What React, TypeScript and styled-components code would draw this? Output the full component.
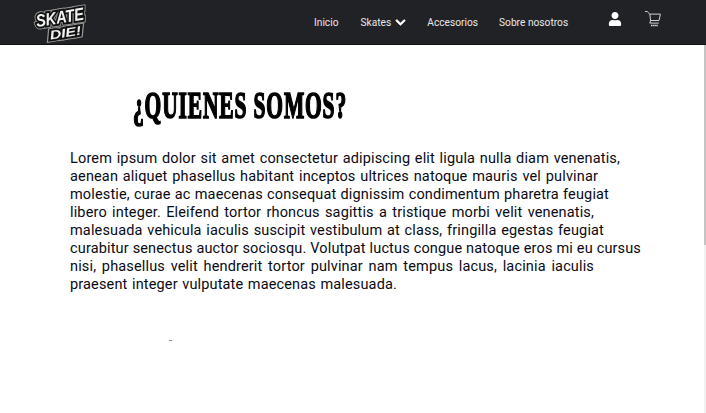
import { createGlobalStyle } from 'styled-components';
import styled from 'styled-components';
import { FaChevronDown, FaUser } from 'react-icons/fa';

const LINES = [
  { text: 'Lorem ipsum dolor sit amet consectetur adipiscing elit ligula nulla diam venenatis,', width: 550 },
  { text: 'aenean aliquet phasellus habitant inceptos ultrices natoque mauris vel pulvinar', width: 528 },
  { text: 'molestie, curae ac maecenas consequat dignissim condimentum pharetra feugiat', width: 539 },
  { text: 'libero integer. Eleifend tortor rhoncus sagittis a tristique morbi velit venenatis,', width: 524 },
  { text: 'malesuada vehicula iaculis suscipit vestibulum at class, fringilla egestas feugiat', width: 534 },
  { text: 'curabitur senectus auctor sociosqu. Volutpat luctus congue natoque eros mi eu cursus', width: 571 },
  { text: 'nisi, phasellus velit hendrerit tortor pulvinar nam tempus lacus, lacinia iaculis', width: 524 },
  { text: 'praesent integer vulputate maecenas malesuada.', width: 327 },
];

function LogoWord({ x, y, size, length, children }: { x: number; y: number; size: number; length: number; children: string }) {
  return (
    <>
      <text x={x} y={y} fontSize={size} textLength={length} lengthAdjust="spacingAndGlyphs" fill="#999" stroke="#999" strokeWidth="5.6">
        {children}
      </text>
      <text x={x} y={y} fontSize={size} textLength={length} lengthAdjust="spacingAndGlyphs" fill="#111" stroke="#111" strokeWidth="3.8">
        {children}
      </text>
      <text x={x} y={y} fontSize={size} textLength={length} lengthAdjust="spacingAndGlyphs" fill="#f2f2f2">
        {children}
      </text>
    </>
  );
}

export default function App() {
  return (
    <Page>
      <GlobalStyle />
      <Header>
        <Logo viewBox="0 0 56 38" aria-label="Skate or Die">
          <g transform="rotate(-9 28 18)" fontFamily="'Liberation Sans', sans-serif" fontWeight="700" fontStyle="italic">
            <LogoWord x={6} y={20} size={17} length={47}>SKATE</LogoWord>
            <LogoWord x={17} y={34} size={12} length={31}>DIE!</LogoWord>
          </g>
        </Logo>
        <Nav>
          <NavLink>Inicio</NavLink>
          <NavLink>
            Skates <Chevron />
          </NavLink>
          <NavLink>Accesorios</NavLink>
          <NavLink>Sobre nosotros</NavLink>
        </Nav>
        <Actions>
          <FaUser size={14} color="#fff" />
          <CartIcon viewBox="0 0 18 18" fill="none" stroke="#e4e4e4" strokeWidth="0.9">
            <path d="M1 1.5h2.2l2.6 2.6h10.6l-1.4 6.4H6.6L5.8 4.1" />
            <path d="M6.6 10.5l-.8 2.6h9" />
            <path d="M7 15.5h7" strokeWidth="1.6" strokeDasharray="1.5 .6" />
          </CartIcon>
        </Actions>
      </Header>
      <Main>
        <Title>¿QUIENES SOMOS?</Title>
        <Body>
          {LINES.map((line) => (
            <Line key={line.text} style={{ width: line.width }}>
              {line.text}
            </Line>
          ))}
        </Body>
        <Speck />
      </Main>
      <ScrollTrack>
        <ScrollThumb />
      </ScrollTrack>
    </Page>
  );
}

const GlobalStyle = createGlobalStyle`
  html, body {
    margin: 0;
    padding: 0;
    background: #ffffff;
    overflow: hidden;
  }
`;

const Page = styled.div`
  position: relative;
  width: 706px;
  height: 413px;
  overflow: hidden;
  font-family: 'Roboto', sans-serif;
  background: #ffffff;
`;

const Header = styled.header`
  display: flex;
  align-items: center;
  box-sizing: border-box;
  height: 45px;
  padding-left: 30px;
  background: #212226;
  border-bottom: 1px solid #111114;
`;

const Logo = styled.svg`
  width: 58px;
  height: 39px;
  overflow: visible;
  filter: blur(0.5px);
`;

const Nav = styled.nav`
  display: flex;
  align-items: center;
  gap: 21px;
  margin-left: 226px;
`;

const NavLink = styled.a`
  display: flex;
  align-items: center;
  gap: 4px;
  color: #e8e8e8;
  font-size: 10.2px;
  &:first-child {
    margin-right: 1px;
  }
`;

const Chevron = styled(FaChevronDown)`
  width: 11px;
  height: 11px;
  color: #ffffff;
  stroke: #ffffff;
  stroke-width: 30px;
`;

const Actions = styled.div`
  display: flex;
  align-items: center;
  gap: 22px;
  margin-left: 40px;
  padding-bottom: 7px;
`;

const CartIcon = styled.svg`
  width: 18px;
  height: 18px;
`;

const Main = styled.main`
  padding: 41px 0 0 70px;
`;

const Title = styled.h1`
  margin: 0 0 24px 63px;
  font-family: 'Liberation Serif', serif;
  font-size: 37px;
  line-height: 40px;
  font-weight: 700;
  letter-spacing: 1.5px;
  color: #000000;
  white-space: nowrap;
  transform: scaleX(0.58);
  transform-origin: left center;
  -webkit-text-stroke: 1.7px #000000;
`;

const Body = styled.div`
  color: #0a0a14;
  font-size: 14.5px;
  letter-spacing: 0.15px;
  line-height: 18px;
`;

const Line = styled.div`
  white-space: normal;
  text-align: justify;
  text-align-last: justify;
  height: 18px;
`;

const Speck = styled.div`
  width: 3px;
  height: 1px;
  margin: 46px 0 0 99px;
  background: #888888;
`;

const ScrollTrack = styled.div`
  position: absolute;
  top: 45px;
  right: 0;
  bottom: 0;
  width: 2px;
  background: #f1f1f1;
`;

const ScrollThumb = styled.div`
  height: 200px;
  background: #c4c4c4;
`;
